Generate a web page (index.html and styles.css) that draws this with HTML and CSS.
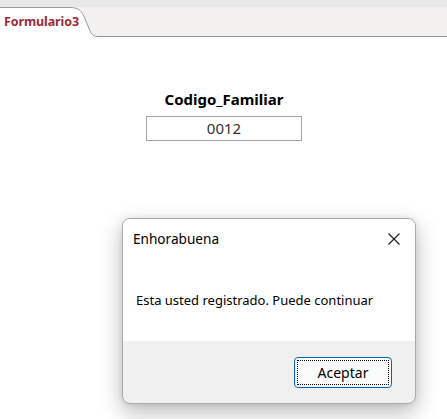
FILE: index.html
```html
<!DOCTYPE html>
<html lang="es">
<head>
<meta charset="utf-8">
<title>Formulario3</title>
<link rel="stylesheet" href="styles.css">
</head>
<body>
<div class="tabbar">
  <div class="tab">
    <svg class="tab-shape" width="98" height="30" viewBox="0 0 98 30">
      <path d="M0,0 H70 C78,0 81,3 84,9 L90.5,25 C92.5,28.5 94.5,30 98,30 H0 Z" fill="#ffffff"/>
      <path d="M0,0.5 H70 C78,0.5 81,3.5 84,9.5 L90.5,25 C92.5,28.5 94.5,29.5 98,29.5" fill="none" stroke="#9a9a9a" stroke-width="1"/>
    </svg>
    <span class="tab-label">Formulario3</span>
  </div>
  <div class="tab-fill"></div>
</div>

<main class="form">
  <div class="field">
    <div class="field-label">Codigo_Familiar</div>
    <div class="field-box">0012</div>
  </div>
</main>

<div class="dialog">
  <div class="dialog-body">
    <div class="dialog-head">
      <span class="dialog-title">Enhorabuena</span>
      <svg class="dialog-close" width="12" height="12" viewBox="0 0 12 12">
        <path d="M0.5,0.5 L11.5,11.5 M11.5,0.5 L0.5,11.5" stroke="#1a1a1a" stroke-width="1.1" fill="none"/>
      </svg>
    </div>
    <p class="dialog-msg">Esta usted registrado. Puede continuar</p>
  </div>
  <div class="dialog-foot">
    <button class="btn"><span class="btn-focus">Aceptar</span></button>
  </div>
</div>
</body>
</html>
```
FILE: styles.css
```css
html, body {
  margin: 0;
  padding: 0;
  background: #ffffff;
  width: 447px;
  height: 419px;
  overflow: hidden;
  font-family: "Noto Sans", "Open Sans", sans-serif;
  position: relative;
}

.tabbar {
  display: flex;
  align-items: flex-end;
  height: 37px;
  background: linear-gradient(#e8e8e8 0 7px, #f2f1f0 7px);
}

.tab {
  position: relative;
  width: 98px;
  height: 30px;
  flex: none;
}

.tab-shape {
  position: absolute;
  left: 0;
  top: 0;
  display: block;
}

.tab-label {
  position: relative;
  display: block;
  padding-left: 4px;
  padding-top: 6px;
  font-size: 12.5px;
  font-weight: 700;
  line-height: 18px;
  color: #9e2a36;
  letter-spacing: -0.1px;
}

.tab-fill {
  flex: 1;
  height: 30px;
  box-sizing: border-box;
  border-bottom: 1px solid #8e939b;
}

.form {
  display: flex;
  justify-content: center;
  padding-top: 52px;
}

.field {
  display: flex;
  flex-direction: column;
  align-items: center;
  padding-left: 1px;
}

.field-label {
  font-size: 15px;
  font-weight: 700;
  line-height: 20px;
  color: #000;
}

.field-box {
  margin-top: 7px;
  width: 154px;
  height: 23px;
  border: 1px solid #a6a6a6;
  text-align: center;
  font-size: 15px;
  line-height: 23px;
  color: #333;
}

.dialog {
  position: absolute;
  left: 122px;
  top: 218px;
  width: 294px;
  height: 186px;
  box-sizing: border-box;
  border: 1px solid #a9a9a9;
  border-radius: 8px;
  background: #f0f0f0;
  overflow: hidden;
  display: flex;
  flex-direction: column;
  box-shadow: 0 8px 22px rgba(0, 0, 0, 0.28), 0 0 6px rgba(0, 0, 0, 0.08);
}

.dialog-body {
  background: #ffffff;
  height: 122px;
  flex: none;
}

.dialog-head {
  display: flex;
  align-items: center;
  justify-content: space-between;
  padding: 10px 15px 0 10px;
  height: 20px;
}

.dialog-title {
  font-size: 13.6px;
  line-height: 20px;
  color: #000;
}

.dialog-close {
  display: block;
}

.dialog-msg {
  margin: 42px 0 0 13px;
  font-size: 13px;
  line-height: 18px;
  color: #000;
}

.dialog-foot {
  flex: 1;
  display: flex;
  justify-content: flex-end;
  align-items: flex-start;
  padding: 16px 23px 0 0;
}

.btn {
  width: 98px;
  height: 31px;
  box-sizing: border-box;
  border: 1.5px solid #0067c0;
  border-radius: 4px;
  background: #fbfbfb;
  padding: 2px;
  font-family: inherit;
  font-size: 14px;
  color: #000;
  display: flex;
}

.btn-focus {
  flex: 1;
  border: 1px dotted #000;
  display: flex;
  align-items: center;
  justify-content: center;
  line-height: 18px;
}
```
